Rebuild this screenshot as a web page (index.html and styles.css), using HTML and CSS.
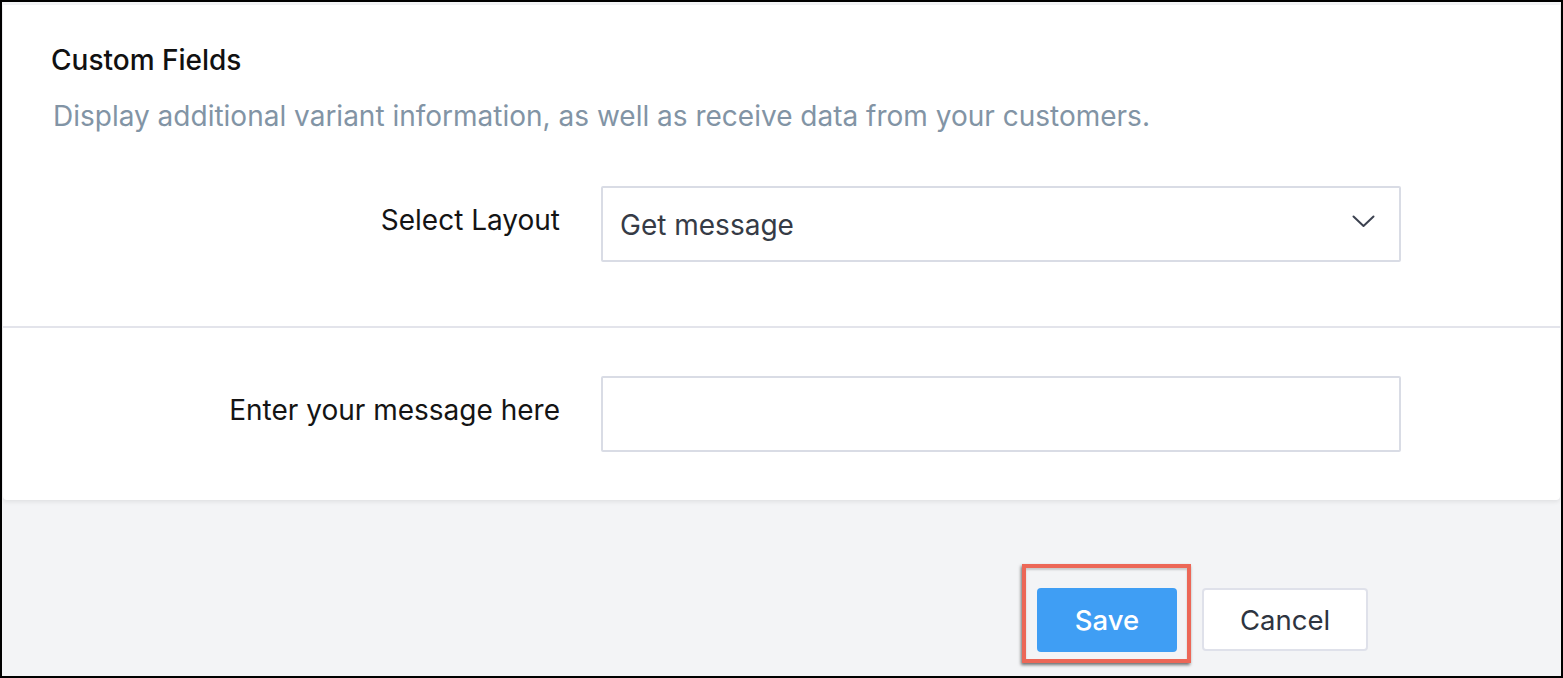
FILE: index.html
```html
<!DOCTYPE html>
<html>
<head>
<meta charset="utf-8">
<link rel="stylesheet" href="styles.css">
</head>
<body>
<div class="frame">
  <div class="card">
    <div class="section first">
      <h2 class="title">Custom Fields</h2>
      <p class="desc">Display additional variant information, as well as receive data from your customers.</p>
      <div class="row">
        <label class="label">Select Layout</label>
        <div class="select">
          <span class="select-text">Get message</span>
          <svg class="chev" width="23" height="13" viewBox="0 0 23 13"><polyline points="1.5,1.5 11.5,11 21.5,1.5" fill="none" stroke="#3c4250" stroke-width="2" stroke-linecap="round" stroke-linejoin="round"/></svg>
        </div>
      </div>
    </div>
    <div class="section second">
      <div class="row">
        <label class="label">Enter your message here</label>
        <div class="input"></div>
      </div>
    </div>
  </div>
  <div class="footer">
    <div class="save-wrap">
      <button class="btn save">Save</button>
      <span class="highlight"></span>
    </div>
    <button class="btn cancel">Cancel</button>
  </div>
</div>
</body>
</html>
```

FILE: styles.css
```css
* { box-sizing: border-box; }
html, body { margin: 0; padding: 0; }
body {
  font-family: Inter, "Noto Sans", sans-serif;
  background: #000;
}
.frame {
  width: 1563px;
  height: 678px;
  border: 2px solid #000;
  background: #f3f4f6;
  display: flex;
  flex-direction: column;
  padding: 3px 1px 0 1px;
}
.card {
  background: #fff;
  border-radius: 0 0 4px 4px;
  box-shadow: 0 2px 4px rgba(0,0,0,0.08);
}
.section.first {
  padding: 38px 0 64px 0;
  border-bottom: 2px solid #e3e4eb;
}
.section.second {
  padding: 48px 0 48px 0;
}
.title {
  margin: 0 0 22px 48px;
  font-size: 28px;
  line-height: 34px;
  font-weight: 500;
  color: #111;
}
.desc {
  margin: 0 0 53px 50px;
  font-size: 28px;
  line-height: 34px;
  color: #8294a5;
  font-weight: 400;
}
.row {
  display: flex;
  align-items: flex-start;
}
.label {
  width: 557px;
  text-align: right;
  font-size: 28px;
  line-height: 34px;
  color: #141414;
  padding-top: 17px;
  margin-right: 41px;
}
.select, .input {
  width: 800px;
  height: 76px;
  border: 2px solid #d9dce5;
  border-radius: 2px;
  background: #fff;
}
.select {
  display: flex;
  align-items: center;
  justify-content: space-between;
  padding: 0 24px 0 17px;
}
.select-text {
  font-size: 28px;
  color: #363b46;
  padding-top: 2px;
}
.chev { display: block; margin-top: -6px; }
.footer {
  flex: 1;
  display: flex;
  align-items: flex-start;
  justify-content: flex-end;
  padding: 88px 192px 0 0;
}
.save-wrap {
  position: relative;
  margin-right: 25px;
}
.btn {
  font-family: Inter, "Noto Sans", sans-serif;
  font-size: 27.5px;
  height: 64px;
  border-radius: 4px;
  cursor: pointer;
  display: block;
}
.save {
  width: 140px;
  background: #3f9ef4;
  color: #fff;
  border: none;
  font-weight: 500;
}
.cancel {
  width: 166px;
  background: #fff;
  color: #2e3440;
  border: 2px solid #dfe1ea;
  height: 63px;
}
.highlight {
  position: absolute;
  left: -15px;
  top: -24px;
  right: -14px;
  bottom: -11px;
  border: 4px solid #ec6757;
  box-shadow: -1px 2px 3px rgba(0,0,0,0.55), inset 0 2px 2px rgba(0,0,0,0.18);
  pointer-events: none;
}
```
